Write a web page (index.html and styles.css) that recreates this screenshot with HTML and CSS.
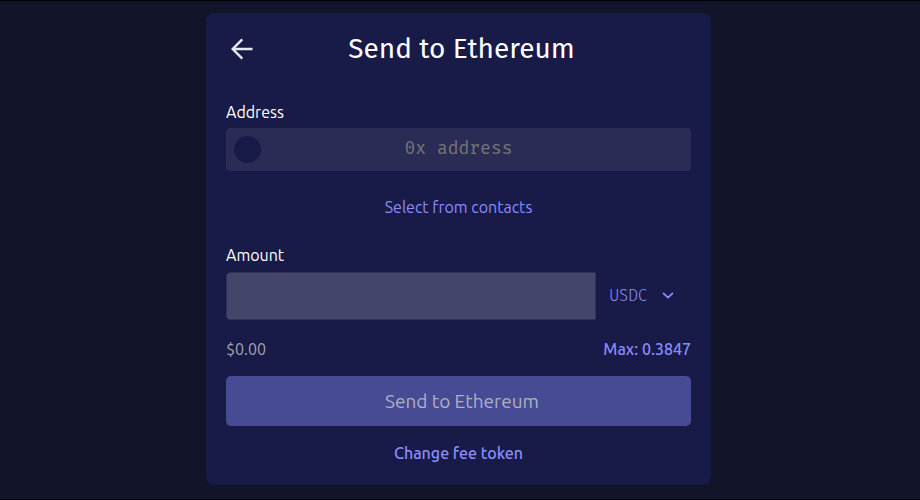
FILE: index.html
```html
<!DOCTYPE html>
<html lang="en">
<head>
<meta charset="utf-8">
<meta name="viewport" content="width=device-width, initial-scale=1">
<title>Send to Ethereum</title>
<link rel="stylesheet" href="styles.css">
</head>
<body>
<main class="page">
  <form class="card">
    <header class="card-header">
      <button class="back" type="button" aria-label="Back">
        <svg width="22" height="22" viewBox="0 0 22 22" fill="none" stroke="currentColor" stroke-width="2.4"><path d="M21.5 11H2M11.3 1.4L1.7 11l9.6 9.6"/></svg>
      </button>
      <h1 class="title">Send to Ethereum</h1>
    </header>

    <label class="label" for="address">Address</label>
    <div class="address-field">
      <span class="avatar"></span>
      <input class="address-input" id="address" type="text" placeholder="0x address">
    </div>
    <a class="link contacts" href="#">Select from contacts</a>

    <label class="label" for="amount">Amount</label>
    <div class="amount-row">
      <input class="amount-input" id="amount" type="text">
      <div class="token">
        <select class="token-select" aria-label="Token"><option>USDC</option></select>
        <svg class="chevron" width="12" height="8" viewBox="0 0 12 8" fill="none" stroke="currentColor" stroke-width="1.7" stroke-linecap="round" stroke-linejoin="round"><path d="M1.500 1.300L6 5.700l4.500-4.400"/></svg>
      </div>
    </div>
    <div class="summary">
      <span class="fiat">$0.00</span>
      <button class="link strong" type="button">Max: 0.3847</button>
    </div>
    <button class="submit" type="submit" disabled>Send to Ethereum</button>
    <button class="link strong fee" type="button">Change fee token</button>
  </form>
</main>
</body>
</html>
```
FILE: styles.css
```css
* {
  box-sizing: border-box;
}

body {
  margin: 0;
  background: #12142a;
  color: #fff;
  font: 16px/24px Ubuntu, "Noto Sans", sans-serif;
}

button,
input,
select {
  margin: 0;
  padding: 0;
  border: 0;
  background: none;
  color: inherit;
  font: inherit;
}

.page {
  min-height: 100vh;
  padding: 12px 19px 14px 16px;
  border-top: 1px solid #020207;
  border-bottom: 1px solid #020207;
}

.card {
  display: flex;
  flex-direction: column;
  max-width: 505px;
  margin: 0 auto;
  padding: 16px 20px 20px;
  border-radius: 8px;
  background: #181a48;
}

.card-header {
  display: grid;
  grid-template-columns: 32px 1fr 26px;
  align-items: center;
  margin-bottom: 31px;
}

.back {
  display: grid;
  place-items: center;
  height: 32px;
  color: #e8e8f0;
}

.title {
  margin: 0;
  font: 400 28px/40px "Fira Sans", "Noto Sans", sans-serif;
  text-align: center;
}

.label {
  margin-bottom: 4px;
}

.address-field {
  display: grid;
  grid-template-columns: 27px 1fr 27px;
  align-items: center;
  height: 43px;
  padding: 0 8px;
  border-radius: 4px;
  background: #2a2c56;
}

.avatar {
  height: 27px;
  border-radius: 50%;
  background: #181a48;
}

.address-input {
  min-width: 0;
  height: 40px;
  padding-bottom: 4px;
  font: 18px/24px "Fira Mono", "Fira Code", "DejaVu Sans Mono", monospace;
  text-align: center;
}

.address-input::placeholder {
  color: #757575;
  opacity: 1;
}

.link {
  color: #8c8dfc;
  text-decoration: none;
}

.strong {
  font-weight: 500;
}

.contacts {
  align-self: center;
  margin: 24px 0;
}

.amount-row {
  display: flex;
  height: 48px;
  margin-top: 1px;
}

.amount-input {
  flex: 1;
  min-width: 0;
  padding: 0 12px;
  border: 1px solid #303159;
  border-radius: 4px 0 0 4px;
  background: #44456a;
}

.token {
  display: grid;
  align-items: center;
  width: 95px;
  padding: 0 17px 0 13px;
  color: #8c8dfc;
}

.token-select,
.chevron {
  grid-area: 1 / 1;
}

.token-select {
  width: 100%;
  appearance: none;
  font-family: "Fira Sans", "Noto Sans", sans-serif;
  font-weight: 300;
}

.chevron {
  justify-self: end;
  pointer-events: none;
}

.summary {
  display: flex;
  justify-content: space-between;
  margin: 17px 0 15px;
}

.fiat {
  color: #a3a5b0;
}

.submit {
  height: 50px;
  padding-left: 7px;
  border-radius: 5px;
  background: #464b93;
  color: #afb0c4;
  font-size: 19px;
}

.fee {
  align-self: center;
  margin-top: 15px;
}
```
